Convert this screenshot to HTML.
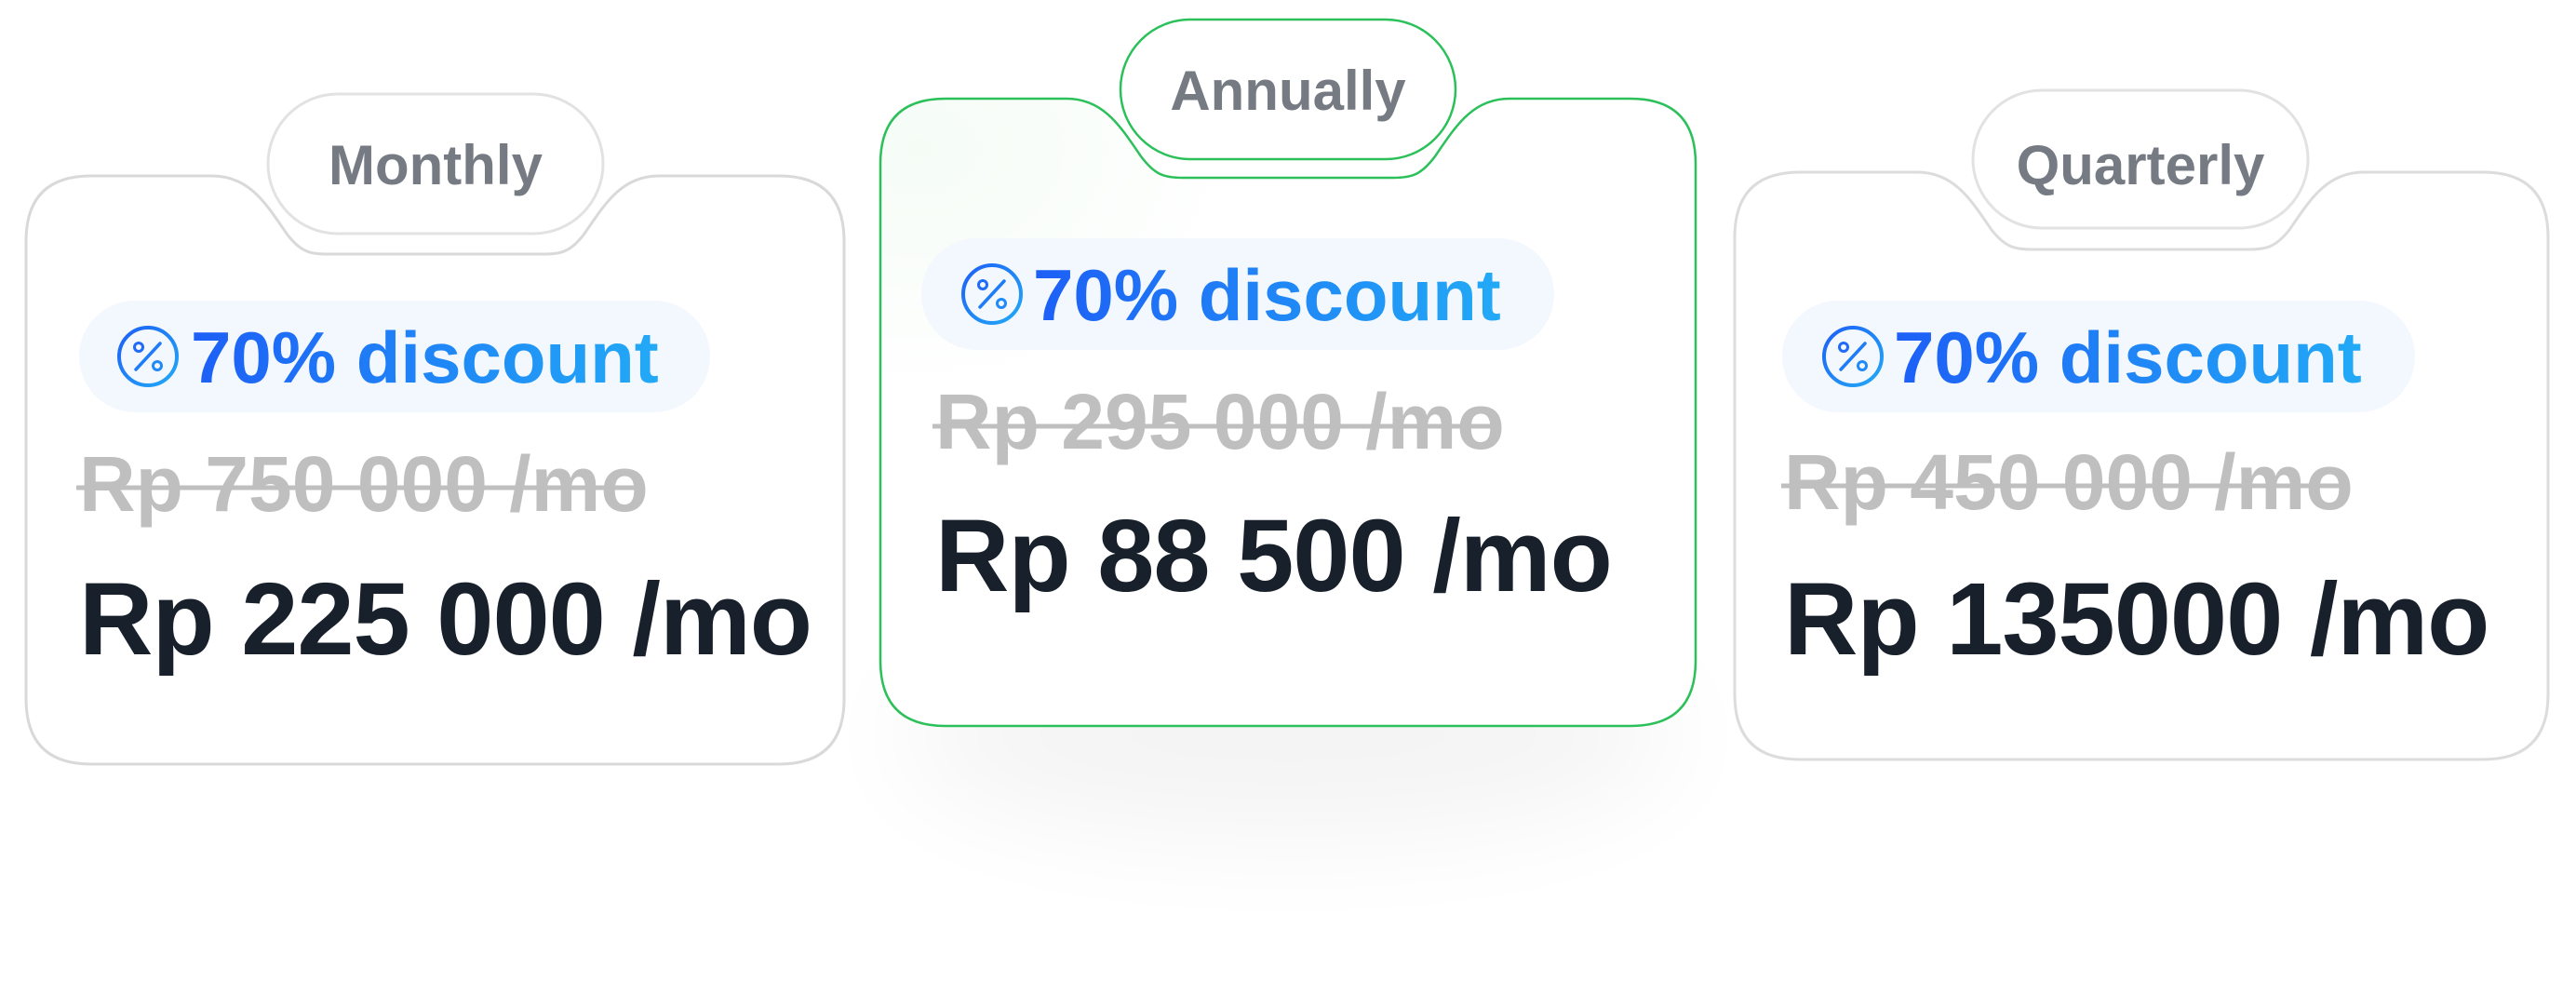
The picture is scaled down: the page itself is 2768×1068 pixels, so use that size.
<!DOCTYPE html>
<html><head><meta charset="utf-8"><style>
html,body{margin:0;padding:0;background:#fff;}
svg{display:block;}
text{font-family:"Liberation Sans",Arial,sans-serif;font-weight:bold;}
</style></head><body>
<svg width="2768" height="1068" viewBox="0 0 2768 1068" xmlns="http://www.w3.org/2000/svg">
<defs>
<linearGradient id="bg" x1="0" y1="0" x2="1" y2="0"><stop offset="0" stop-color="#1d5ff6"/><stop offset="1" stop-color="#22aaf6"/></linearGradient>
<linearGradient id="ig" x1="0" y1="0" x2="1" y2="1"><stop offset="0" stop-color="#1d5ff6"/><stop offset="1" stop-color="#22aaf6"/></linearGradient>
<radialGradient id="gr" cx="0.05" cy="0.08" r="0.4"><stop offset="0" stop-color="#f5fcf6"/><stop offset="1" stop-color="#ffffff"/></radialGradient>
<filter id="blur" x="-50%" y="-50%" width="200%" height="200%"><feGaussianBlur stdDeviation="60"/></filter>
<g id="icon">
<circle cx="0" cy="0" r="31" fill="none" stroke="url(#ig)" stroke-width="4"/>
<circle cx="-10" cy="-10" r="4.5" fill="none" stroke="#1f6bf8" stroke-width="3"/>
<circle cx="10" cy="10" r="4.5" fill="none" stroke="#1f8af8" stroke-width="3"/>
<line x1="-13" y1="14" x2="13" y2="-14" stroke="#1f7cf8" stroke-width="3.5" stroke-linecap="round"/>
</g>
</defs>

<ellipse cx="1384" cy="790" rx="420" ry="110" fill="#000" opacity="0.045" filter="url(#blur)"/>

<!-- Left card -->
<g transform="translate(28,189)">
<path d="M0,70 Q0,0 70,0 L200,0 C240,0 258,30 280,62 C295,82 305,84 325,84 L555,84 C575,84 585,82 600,62 C622,30 640,0 680,0 L809,0 Q879,0 879,70 L879,562 Q879,632 809,632 L70,632 Q0,632 0,562 Z" fill="#fff" stroke="#d9d9d9" stroke-width="3"/>
</g>
<rect x="288" y="101" width="360" height="150" rx="75" fill="#fff" stroke="#e2e2e2" stroke-width="3"/>
<text x="468" y="198" text-anchor="middle" font-size="60" fill="#767b83">Monthly</text>
<rect x="85" y="323" width="678" height="120" rx="60" fill="#f3f7fe"/>
<use href="#icon" x="159" y="383"/>
<text x="205" y="411" font-size="78" fill="url(#bg)">70% discount</text>
<text x="85" y="549" font-size="84" fill="#bfbfbf">Rp 750 000 /mo</text>
<line x1="82" y1="524" x2="690" y2="524" stroke="#bfbfbf" stroke-width="5"/>
<text x="85" y="703" font-size="110" fill="#17202b" letter-spacing="-1">Rp 225 000 /mo</text>

<!-- Middle card -->
<g transform="translate(946,106)">
<path d="M0,70 Q0,0 70,0 L200,0 C240,0 258,30 280,62 C295,82 305,85 325,85 L551,85 C571,85 581,82 596,62 C618,30 636,0 676,0 L806,0 Q876,0 876,70 L876,604 Q876,674 806,674 L70,674 Q0,674 0,604 Z" fill="url(#gr)" stroke="#2cc05a" stroke-width="2.5"/>
</g>
<rect x="1204" y="21" width="360" height="150" rx="75" fill="#fff" stroke="#2cc05a" stroke-width="2.5"/>
<text x="1384" y="118" text-anchor="middle" font-size="60" fill="#767b83">Annually</text>
<rect x="990" y="256" width="680" height="120" rx="60" fill="#f3f7fe"/>
<use href="#icon" x="1066" y="316"/>
<text x="1110" y="344" font-size="78" fill="url(#bg)">70% discount</text>
<text x="1005" y="482" font-size="84" fill="#bfbfbf">Rp 295 000 /mo</text>
<line x1="1002" y1="458" x2="1612" y2="458" stroke="#bfbfbf" stroke-width="5"/>
<text x="1005" y="635" font-size="110" fill="#17202b" letter-spacing="-1">Rp 88 500 /mo</text>

<!-- Right card -->
<g transform="translate(1864,185)">
<path d="M0,70 Q0,0 70,0 L196,0 C236,0 254,30 276,62 C291,81 301,83 321,83 L551,83 C571,83 581,81 596,62 C618,30 636,0 676,0 L804,0 Q874,0 874,70 L874,561 Q874,631 804,631 L70,631 Q0,631 0,561 Z" fill="#fff" stroke="#dcdcdc" stroke-width="3"/>
</g>
<rect x="2120" y="97" width="360" height="148" rx="74" fill="#fff" stroke="#e2e2e2" stroke-width="3"/>
<text x="2300" y="198" text-anchor="middle" font-size="60" fill="#767b83">Quarterly</text>
<rect x="1915" y="323" width="680" height="120" rx="60" fill="#f3f7fe"/>
<use href="#icon" x="1991" y="383"/>
<text x="2035" y="411" font-size="78" fill="url(#bg)">70% discount</text>
<text x="1917" y="547" font-size="84" fill="#bfbfbf">Rp 450 000 /mo</text>
<line x1="1914" y1="522" x2="2524" y2="522" stroke="#bfbfbf" stroke-width="5"/>
<text x="1917" y="703" font-size="110" fill="#17202b" letter-spacing="-1">Rp 135000 /mo</text>
</svg>
</body></html>
